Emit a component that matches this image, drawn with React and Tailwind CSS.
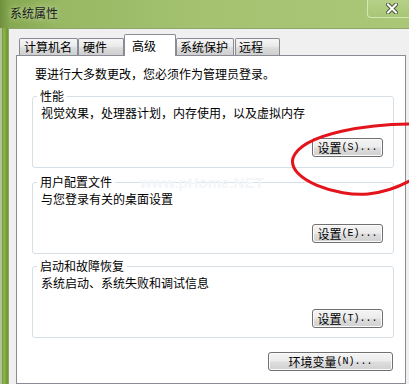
import React from "react";

const cjk = "font-['Noto_Sans_CJK_SC','Noto_Sans_CJK_JP',sans-serif]";

function Btn({ label, hot, w, className = "" }) {
  return (
    <div
      className={`flex h-[19px] items-center justify-center rounded-[3px] border border-[#707070] bg-[linear-gradient(to_bottom,#f4f4f4_0%,#ececec_48%,#dedede_52%,#d0d0d0_100%)] shadow-[inset_0_0_0_1px_#fbfbfb] text-[12px] leading-[16px] text-black ${className}`}
      style={{ width: w }}
    >
      <span>{label}</span>
      <span className="font-['Liberation_Mono',monospace] text-[10px] leading-[16px]">({hot})...</span>
    </div>
  );
}

function Group({ title, desc, btn, hot, btnMt = "mt-[17px]", pb = "pb-[10px]", mt }) {
  return (
    <fieldset className={`w-[362px] rounded-[3px] border border-[#d5dfe5] px-[8px] ${pb} ${mt}`}>
      <legend className="ml-[-4px] px-[3px] text-[12px] leading-[16px] text-black">{title}</legend>
      <div className="pt-[1px] text-[12px] leading-[16px] text-black">{desc}</div>
      <div className={`flex justify-end pr-[2px] ${btnMt}`}>
        <Btn label={btn} hot={hot} w={71} />
      </div>
    </fieldset>
  );
}

function Tab({ label, w, pl, selected }) {
  if (selected) {
    return (
      <div
        className="relative z-10 -mb-[1px] flex h-[22px] items-center rounded-t-[2px] border border-b-0 border-[#898c95] bg-white text-[12px] leading-[16px] text-black"
        style={{ width: w, paddingLeft: pl }}
      >
        {label}
      </div>
    );
  }
  return (
    <div
      className="flex h-[17px] items-center rounded-t-[2px] border border-b-0 border-[#898c95] bg-[linear-gradient(to_bottom,#f6f6f6_0%,#ebebeb_45%,#dcdcdc_55%,#cfcfcf_100%)] text-[12px] leading-[16px] text-black"
      style={{ width: w, paddingLeft: pl }}
    >
      {label}
    </div>
  );
}

export default function App() {
  return (
    <div className={`relative flex h-[384px] w-[409px] flex-col overflow-hidden bg-[#8fb05a] ${cjk}`}>
      {/* title bar */}
      <div className="flex h-[28px] shrink-0 items-center bg-[linear-gradient(to_right,#6f8f3e_0px,#86a850_10px,#98b864_60px,#a4c270_200px,#a9c777_409px)] pb-[3px] pl-[10px]">
        <span className="text-[12px] leading-[16px] text-[#1b1b1b] [text-shadow:0_0_6px_rgba(230,245,210,0.9)]">系统属性</span>
      </div>
      {/* close button */}
      <div className="absolute left-[367px] top-0 flex h-[18px] w-[50px] items-start justify-center rounded-bl-[4px] border border-t-0 border-[#d4e6b2] bg-[linear-gradient(to_bottom,#b6d089,#a8c676)] pr-[1px] pt-[3px]">
        <svg width="12" height="11" viewBox="0 0 12 11">
          <path d="M2 1.5 L10 9.5 M10 1.5 L2 9.5" stroke="#48563a" strokeWidth="4" strokeLinecap="square" />
          <path d="M2 1.5 L10 9.5 M10 1.5 L2 9.5" stroke="#ffffff" strokeWidth="2" strokeLinecap="square" />
        </svg>
      </div>

      <div className="flex min-h-0 flex-1">
        {/* left frame */}
        <div className="w-[8px] shrink-0 bg-[linear-gradient(to_right,#b4c29c_0px,#b4c29c_2px,#6e9834_2px,#8fb651_4px,#7aa23c_6px,#6c9430_8px)]" />
        {/* client area */}
        <div className="flex min-w-0 flex-1 flex-col border-l border-t border-[#8ea56c] bg-[#f0f0f0] pl-[7px] pt-[5px]">
          <div className="flex h-[21px] shrink-0 items-end pl-[3px]">
            <Tab label="计算机名" w={59} pl={4} />
            <Tab label="硬件" w={46} pl={4} />
            <Tab label="高级" w={52} pl={7} selected />
            <Tab label="系统保护" w={58} pl={3} />
            <div className="w-[1px]" />
            <Tab label="远程" w={45} pl={3} />
          </div>
          <div className="flex w-[390px] flex-1 flex-col border border-[#898c95] bg-white pl-[15px] pr-[11px] pt-[10px]">
            <div className="ml-[3px] text-[12px] leading-[16px] text-black">要进行大多数更改，您必须作为管理员登录。</div>
            <Group
              mt="mt-[6px]"
              title="性能"
              desc="视觉效果，处理器计划，内存使用，以及虚拟内存"
              btn="设置"
              hot="S"
            />
            <Group mt="mt-[6px]" title="用户配置文件" desc="与您登录有关的桌面设置" btn="设置" hot="E" />
            <Group
              mt="mt-[4px]"
              title="启动和故障恢复"
              desc="系统启动、系统失败和调试信息"
              btn="设置"
              hot="T"
              btnMt="mt-[18px]"
              pb="pb-[9px]"
            />
            <div className="mt-[14px] flex justify-end pr-[1px]">
              <Btn label="环境变量" hot="N" w={125} />
            </div>
          </div>
        </div>
      </div>

      {/* faint watermark */}
      <div className="pointer-events-none absolute left-[140px] top-[175px] font-['Liberation_Sans',sans-serif] text-[15px] font-bold leading-[16px] text-[#f3f6f9]">
        www.pHome.NET
      </div>

      {/* red hand-drawn ellipse annotation */}
      <svg className="pointer-events-none absolute left-0 top-0" width="409" height="384" viewBox="0 0 409 384">
        <path
          d="M 418 124 C 372 123, 302 133, 293 158 C 287 180, 338 197, 368 194 C 388 192, 404 185, 418 176"
          fill="none"
          stroke="#e3141b"
          strokeWidth="3"
          strokeLinecap="round"
        />
      </svg>
    </div>
  );
}
